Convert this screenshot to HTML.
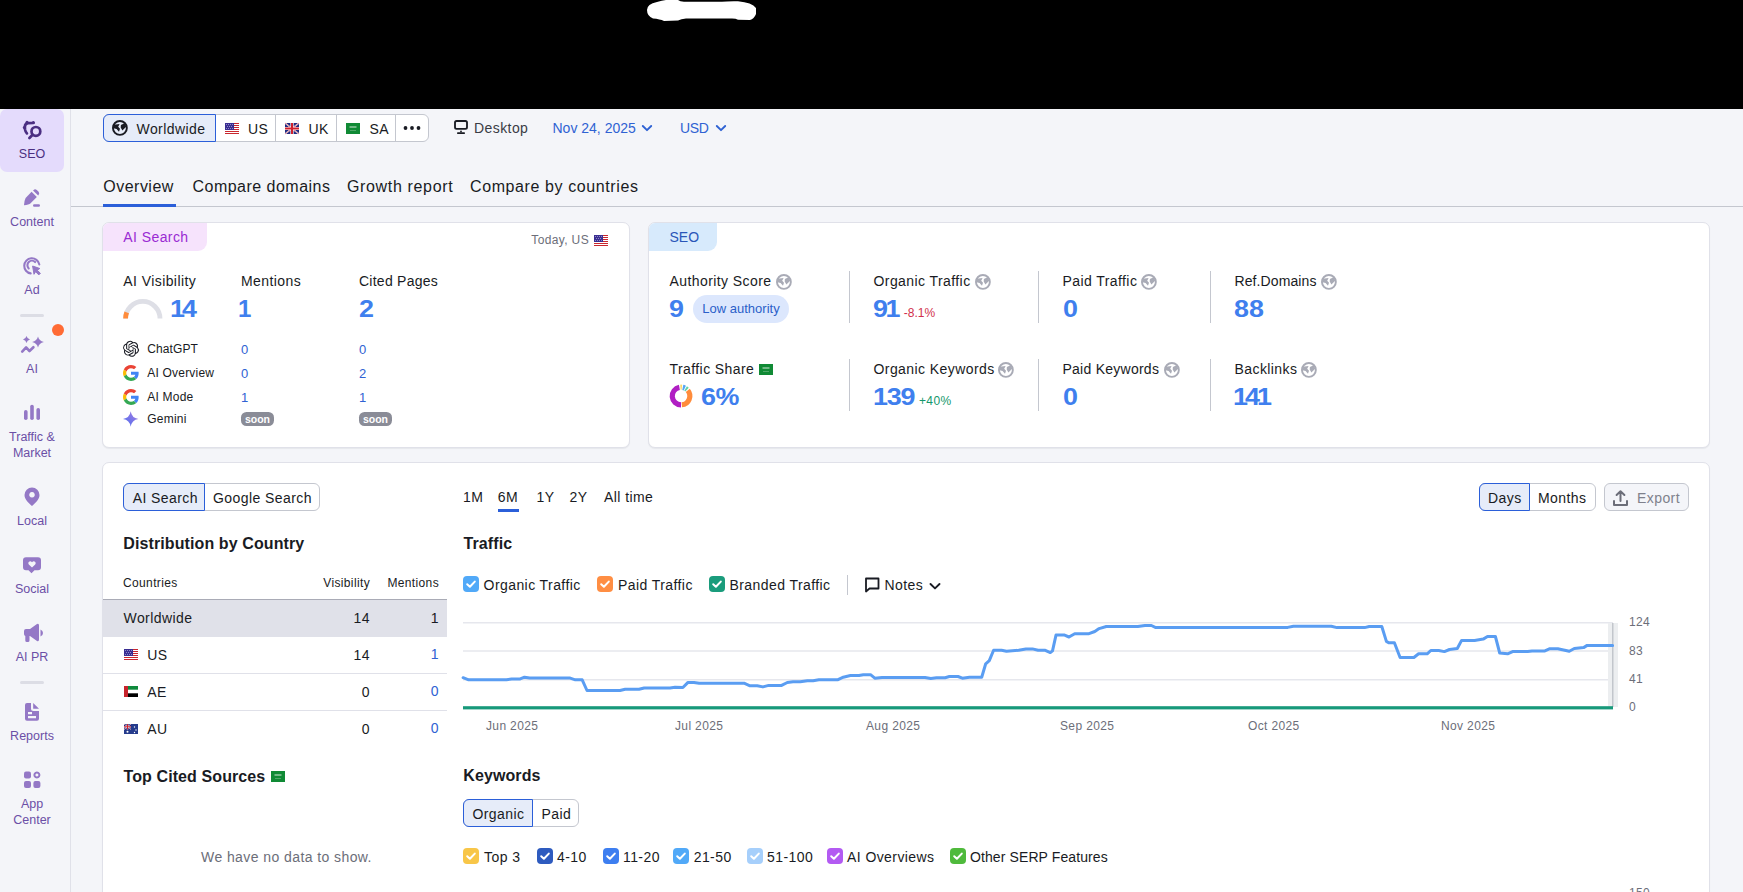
<!DOCTYPE html>
<html><head><meta charset="utf-8">
<style>
*{box-sizing:border-box;margin:0;padding:0}
html,body{width:1743px;height:892px;overflow:hidden;background:#f4f5f9;font-family:"Liberation Sans",sans-serif;color:#191b23}
.a{position:absolute}
.t{position:absolute;line-height:1;white-space:nowrap;letter-spacing:0.03em}
.blk{position:absolute;left:0;top:0;width:1743px;height:109px;background:#000}
.blob{position:absolute;left:647px;top:1px;width:109px;height:19px;background:#fff;border-radius:10px}
.side{position:absolute;left:0;top:109px;width:71px;height:783px;background:#f4f5f9;border-right:1px solid #e0e1e9}
.sl{position:absolute;left:0;width:64px;text-align:center;font-size:12.5px;line-height:1;color:#6b4fa6;white-space:nowrap}
.card{position:absolute;background:#fff;border:1px solid #e0e1e9;border-radius:7px;box-shadow:0 1px 1px rgba(25,27,35,.06)}
.blue{color:#3b7ded}
.num{font-weight:bold;font-size:24px;color:#3f7fee;letter-spacing:0;transform:scaleX(1.12);transform-origin:0 0}
.lbl{font-size:14px;color:#191b23}
.gray{color:#6c6e79}
.seg{position:absolute;height:28px;border:1px solid #c4c7cf;border-radius:6px;background:#fff}
.segact{position:absolute;top:-1px;height:28px;border:1px solid #2b5fd9;background:#e6edfb}
.vdiv{position:absolute;width:1px;background:#c4c7cf}
.cb{position:absolute;width:16px;height:16px;border-radius:4px}
.cb svg{position:absolute;left:0;top:0}
</style></head><body>
<div class="blk"></div>
<svg class="a" style="left:0;top:0" width="800" height="30"><path d="M657 2 Q662 0.3 666 0 L678 0 Q680 1.6 684 1.8 L722 1.8 Q727 1 738 1.2 Q752 2.5 756 8 L756 14 Q754 19 750 20 L738 19.8 Q736 18.4 732 18.4 L686 18.4 Q681 18.6 678 20.5 L664 21 Q660 19 653 18.5 Q647 16 647 10 Q647 4 657 2 Z" fill="#fff"/></svg>

<!-- SIDEBAR -->
<div class="side"></div>
<div class="a" style="left:0;top:109px;width:64px;height:63px;background:#e4dbfc;border-radius:7px"></div>


<!-- main separator line under tabs -->
<div class="a" style="left:71px;top:206px;width:1672px;height:1px;background:#c4c7cf"></div>

<!-- sidebar labels -->
<div class="sl" style="top:148px;color:#4b2f82">SEO</div>
<div class="sl" style="top:216px">Content</div>
<div class="sl" style="top:284px">Ad</div>
<div class="sl" style="top:362.5px">AI</div>
<div class="sl" style="top:431px">Traffic &amp;</div>
<div class="sl" style="top:447px">Market</div>
<div class="sl" style="top:515px">Local</div>
<div class="sl" style="top:583px">Social</div>
<div class="sl" style="top:651px">AI PR</div>
<div class="sl" style="top:730px">Reports</div>
<div class="sl" style="top:798px">App</div>
<div class="sl" style="top:814px">Center</div>
<div class="a" style="left:20px;top:314px;width:24px;height:3px;border-radius:2px;background:#dcdde5"></div>
<div class="a" style="left:20px;top:681px;width:24px;height:3px;border-radius:2px;background:#dcdde5"></div>
<div class="a" style="left:52px;top:324px;width:12px;height:12px;border-radius:50%;background:#ff6b35"></div>
<svg class="a" style="left:0;top:0" width="70" height="892">
 <g fill="none" stroke="#4b2f82" stroke-width="2.7" stroke-linecap="round" stroke-linejoin="round">
  <circle cx="35.9" cy="131.4" r="4.4"/>
  <path d="M32.6 134.8 L29.4 138"/>
  <path d="M33.4 123 L28 123.1 Q25 123.4 24.9 126.6 L25 129.4 Q25.3 131.6 26.9 133.4"/>
  <g fill="#4b2f82" stroke="none"><circle cx="27" cy="122.2" r="1.5"/><circle cx="33.4" cy="122.6" r="1.5"/><circle cx="24.3" cy="127.4" r="1.5"/></g>
 </g>
 <g fill="#9478c6">
  <!-- pencil -->
  <path d="M31.6 191.8 L36.8 197 L30.6 203.2 Q29 204.6 24 205.2 Q24.4 200.2 25.6 198 Z"/>
  <path d="M33.4 190.2 Q35 188.6 36.8 190 L38.6 191.8 Q40 193.6 38.4 195.2 L38.2 195.6 L33 190.4 Z"/>
  <rect x="33" y="204.2" width="7" height="2.6" rx="1.3"/>
  <!-- bars -->
  <rect x="24" y="410" width="3.6" height="10" rx="1.8"/>
  <rect x="30.2" y="404.8" width="3.6" height="15.2" rx="1.8"/>
  <rect x="36.4" y="408" width="3.6" height="12" rx="1.8"/>
  <!-- local pin -->
  <path d="M32 487.5 a7.5 7.5 0 0 1 7.5 7.5 c0 4.5 -4.5 8.5 -7.5 11 c-3 -2.5 -7.5 -6.5 -7.5 -11 a7.5 7.5 0 0 1 7.5 -7.5 z M32 492 a2.8 2.8 0 1 0 0.01 0 z" fill-rule="evenodd"/>
  <!-- social -->
  <path d="M26 557.2 h12 q3 0 3 3 v7 q0 3 -3 3 h-3.5 l-3 3 l-3 -3 h-2.5 q-3 0 -3 -3 v-7 q0 -3 3 -3 z M32 567.5 l-3.2 -3 q-1.3 -1.6 0.2 -2.8 q1.5 -1 3 0.5 q1.5 -1.5 3 -0.5 q1.5 1.2 0.2 2.8 z" fill-rule="evenodd"/>
  <!-- megaphone -->
  <path d="M24 631 q0 -2 2 -2 h4 l7 -5 q2 -1 2 1.5 v14 q0 2.5 -2 1.5 l-7 -5 h-0.5 v4.5 q0 1.6 -1.6 1.6 h-1 q-1.6 0 -1.6 -1.6 v-4.5 q-1.3 -0.3 -1.3 -2 z"/>
  <path d="M40.5 629.5 q2.5 1 2.5 3.5 q0 2.5 -2.5 3.5 z"/>
  <!-- reports -->
  <path d="M27 703 H31 V708.6 Q31 711.1 33.5 711.1 H39 V718.7 Q39 720.7 37 720.7 H27 Q25 720.7 25 718.7 V705 Q25 703 27 703 Z M28 712 V714.2 H32 V712 Z M28 716 V718.2 H36 V716 Z" fill-rule="evenodd"/>
  <path d="M33.2 703 L39 708.8 H33.2 Z"/>
  <!-- app center -->
  <rect x="24" y="771.6" width="7" height="7" rx="2"/>
  <rect x="24" y="781" width="7" height="7" rx="2"/>
  <rect x="33.4" y="781" width="7" height="7" rx="2"/>
  <path d="M36.9 771.6 a3.5 3.5 0 1 1 -0.01 0 z M36.9 773.6 a1.5 1.5 0 1 0 0.01 0 z" fill-rule="evenodd"/>
  <!-- AI sparkles -->
  <path d="M26.5 336 q0.6 2.6 3.5 3.5 q-2.9 0.9 -3.5 3.5 q-0.6 -2.6 -3.5 -3.5 q2.9 -0.9 3.5 -3.5 z"/>
  <path d="M38 336.4 q1 4.4 5.9 5.6 q-4.9 1.2 -5.9 5.6 q-1 -4.4 -5.9 -5.6 q4.9 -1.2 5.9 -5.6 z"/>
 </g>
 <g fill="none" stroke="#9478c6" stroke-linecap="round" stroke-linejoin="round">
  <path d="M22.2 351.6 L26.1 347.4 L29.5 351 L33.4 347.2" stroke-width="2.6"/>
  <!-- ad target -->
  <g transform="translate(-0.5 -1.2)"><path d="M31.2 274.6 A7.6 7.6 0 1 1 39.8 265.6" stroke-width="2.1"/>
  <path d="M29.2 269.6 A3.9 3.9 0 1 1 35.6 263.3" stroke-width="2.1"/></g>
 </g>
 <path d="M32.6 266 L39.8 268.5 L37.2 270.2 L40.4 273.3 L38.8 274.9 L35.6 271.7 L34 274.3 Z" fill="#9478c6" stroke="#9478c6" stroke-width="1" stroke-linejoin="round"/>
</svg>
<!-- toolbar -->
<div class="a" style="left:103px;top:114px;width:326px;height:28px;border:1px solid #c4c7cf;border-radius:6px;background:#fff"></div>
<div class="a" style="left:103px;top:114px;width:113px;height:28px;border:1px solid #2b5fd9;border-radius:6px 0 0 6px;background:#e6ecf9"></div>
<div class="a" style="left:275px;top:115px;width:1px;height:26px;background:#c4c7cf"></div>
<div class="a" style="left:336px;top:115px;width:1px;height:26px;background:#c4c7cf"></div>
<div class="a" style="left:395px;top:115px;width:1px;height:26px;background:#c4c7cf"></div>
<div class="t" style="left:136.5px;top:122px;font-size:14px">Worldwide</div>
<div class="t" style="left:248px;top:122px;font-size:14px">US</div>
<div class="t" style="left:308.5px;top:122px;font-size:14px">UK</div>
<div class="t" style="left:369.5px;top:122px;font-size:14px">SA</div>
<div class="t" style="left:474px;top:121px;font-size:14px;color:#3a3c45">Desktop</div>
<div class="t" style="left:552.5px;top:121px;font-size:14px;color:#2f62d3;letter-spacing:0">Nov 24, 2025</div>
<div class="t" style="left:680px;top:121px;font-size:14px;color:#2f62d3;letter-spacing:-0.4px">USD</div>
<!-- tabs -->
<div class="t" style="left:103.3px;top:179px;font-size:16px">Overview</div>
<div class="t" style="left:192.5px;top:179px;font-size:16px">Compare domains</div>
<div class="t" style="left:347px;top:179px;font-size:16px;letter-spacing:0.65px">Growth report</div>
<div class="t" style="left:470px;top:179px;font-size:16px;letter-spacing:0.6px">Compare by countries</div>
<div class="a" style="left:103px;top:204px;width:73px;height:3px;background:#2b5fd9"></div>
<!-- AI card -->
<div class="card" style="left:102px;top:222px;width:528px;height:226px"></div>
<div class="a" style="left:103px;top:223px;width:104px;height:28px;background:#f6e3fc;border-radius:6px 0 9px 0"></div>
<div class="t" style="left:123.3px;top:230px;font-size:14px;color:#9a2ad3">AI Search</div>
<div class="t gray" style="left:531.3px;top:234px;font-size:12px">Today, US</div>
<div class="t lbl" style="left:123.3px;top:274px">AI Visibility</div>
<div class="t lbl" style="left:241px;top:274px">Mentions</div>
<div class="t lbl" style="left:359px;top:274px;letter-spacing:0.25px">Cited Pages</div>
<div class="t num" style="left:170px;top:297px;letter-spacing:-2.6px">14</div>
<div class="t num" style="left:238px;top:297px;transform:none">1</div>
<div class="t num" style="left:359px;top:297px">2</div>
<div class="t" style="left:147.3px;top:343px;font-size:12px;letter-spacing:0.1px">ChatGPT</div>
<div class="t" style="left:147.3px;top:367px;font-size:12px;letter-spacing:0.2px">AI Overview</div>
<div class="t" style="left:147.3px;top:391px;font-size:12px;letter-spacing:0.2px">AI Mode</div>
<div class="t" style="left:147.3px;top:413px;font-size:12px;letter-spacing:0.2px">Gemini</div>
<div class="t" style="left:241px;top:343px;font-size:13px;color:#2f62d3">0</div>
<div class="t" style="left:241px;top:367px;font-size:13px;color:#2f62d3">0</div>
<div class="t" style="left:241px;top:391px;font-size:13px;color:#2f62d3">1</div>
<div class="t" style="left:359px;top:343px;font-size:13px;color:#2f62d3">0</div>
<div class="t" style="left:359px;top:367px;font-size:13px;color:#2f62d3">2</div>
<div class="t" style="left:359px;top:391px;font-size:13px;color:#2f62d3">1</div>
<div class="a" style="left:241px;top:412px;width:33px;height:14px;border-radius:5.5px;background:#8a8c97;color:#fff;font-size:10.5px;font-weight:bold;line-height:14px;text-align:center">soon</div>
<div class="a" style="left:359px;top:412px;width:33px;height:14px;border-radius:5.5px;background:#8a8c97;color:#fff;font-size:10.5px;font-weight:bold;line-height:14px;text-align:center">soon</div>

<!-- SEO card -->
<div class="card" style="left:648px;top:222px;width:1062px;height:226px"></div>
<div class="a" style="left:649px;top:223px;width:68px;height:28px;background:#d7eafc;border-radius:6px 0 9px 0"></div>
<div class="t" style="left:669.5px;top:230px;font-size:14px;color:#2a56b8;letter-spacing:0">SEO</div>
<div class="t lbl" style="left:669.5px;top:274px">Authority Score</div>
<div class="t lbl" style="left:873.5px;top:274px">Organic Traffic</div>
<div class="t lbl" style="left:1062.5px;top:274px">Paid Traffic</div>
<div class="t lbl" style="left:1234.5px;top:274px;letter-spacing:0.1px">Ref.Domains</div>
<div class="t num" style="left:669px;top:297px">9</div>
<div class="a" style="left:693px;top:295px;width:96px;height:28px;border-radius:14px;background:#dce7fd;color:#2b5fc9;font-size:13px;line-height:28px;text-align:center">Low authority</div>
<div class="t num" style="left:872.5px;top:297px;letter-spacing:-2.2px">91</div>
<div class="t" style="left:903.8px;top:306.5px;font-size:12px;color:#d1304c;letter-spacing:0">-8.1%</div>
<div class="t num" style="left:1062.5px;top:297px">0</div>
<div class="t num" style="left:1233.5px;top:297px">88</div>
<div class="t lbl" style="left:669.5px;top:362px">Traffic Share</div>
<div class="t lbl" style="left:873.5px;top:362px">Organic Keywords</div>
<div class="t lbl" style="left:1062.5px;top:362px;letter-spacing:0.25px">Paid Keywords</div>
<div class="t lbl" style="left:1234.5px;top:362px">Backlinks</div>
<div class="t num" style="left:701px;top:385px;letter-spacing:-0.4px">6%</div>
<div class="t num" style="left:873px;top:385px;letter-spacing:-1.1px">139</div>
<div class="t" style="left:919px;top:394.5px;font-size:12px;color:#15976c">+40%</div>
<div class="t num" style="left:1062.5px;top:385px">0</div>
<div class="t num" style="left:1233px;top:385px;letter-spacing:-2.6px">141</div>
<div class="vdiv" style="left:849px;top:271px;height:52px"></div>
<div class="vdiv" style="left:1038px;top:271px;height:52px"></div>
<div class="vdiv" style="left:1210px;top:271px;height:52px"></div>
<div class="vdiv" style="left:849px;top:359px;height:52px"></div>
<div class="vdiv" style="left:1038px;top:359px;height:52px"></div>
<div class="vdiv" style="left:1210px;top:359px;height:52px"></div>
<!-- bottom card -->
<div class="card" style="left:102px;top:462px;width:1608px;height:460px"></div>
<!-- AI/Google seg -->
<div class="a" style="left:123px;top:483px;width:197px;height:28px;border:1px solid #c4c7cf;border-radius:6px;background:#fff"></div>
<div class="a" style="left:123px;top:483px;width:82px;height:28px;border:1px solid #2b5fd9;border-radius:6px 0 0 6px;background:#e6ecf9"></div>
<div class="t" style="left:132.7px;top:491px;font-size:14px">AI Search</div>
<div class="t" style="left:213px;top:491px;font-size:14px">Google Search</div>
<div class="t" style="left:123.3px;top:536px;font-size:16px;font-weight:bold;letter-spacing:0.1px">Distribution by Country</div>
<div class="t" style="left:123px;top:577px;font-size:12px">Countries</div>
<div class="t" style="left:370px;top:577px;font-size:12px;transform:translateX(-100%)">Visibility</div>
<div class="t" style="left:439px;top:577px;font-size:12px;transform:translateX(-100%)">Mentions</div>
<div class="a" style="left:103px;top:599px;width:344px;height:1px;background:#a9abb6"></div>
<div class="a" style="left:103px;top:600px;width:344px;height:36.5px;background:#e0e1e9"></div>
<div class="a" style="left:103px;top:673px;width:344px;height:1px;background:#e0e1e9"></div>
<div class="a" style="left:103px;top:710px;width:344px;height:1px;background:#e0e1e9"></div>
<div class="t" style="left:123.5px;top:611px;font-size:14px">Worldwide</div>
<div class="t" style="left:370px;top:611px;font-size:14px;transform:translateX(-100%)">14</div>
<div class="t" style="left:439px;top:611px;font-size:14px;transform:translateX(-100%)">1</div>
<div class="t" style="left:147.3px;top:648px;font-size:14px">US</div>
<div class="t" style="left:370px;top:648px;font-size:14px;transform:translateX(-100%)">14</div>
<div class="t" style="left:439px;top:647px;font-size:14px;transform:translateX(-100%);color:#2f62d3">1</div>
<div class="t" style="left:147.3px;top:685px;font-size:14px">AE</div>
<div class="t" style="left:370px;top:685px;font-size:14px;transform:translateX(-100%)">0</div>
<div class="t" style="left:439px;top:683.5px;font-size:14px;transform:translateX(-100%);color:#2f62d3">0</div>
<div class="t" style="left:147.3px;top:722px;font-size:14px">AU</div>
<div class="t" style="left:370px;top:722px;font-size:14px;transform:translateX(-100%)">0</div>
<div class="t" style="left:439px;top:720.5px;font-size:14px;transform:translateX(-100%);color:#2f62d3">0</div>
<div class="t" style="left:123.5px;top:769px;font-size:16px;font-weight:bold;letter-spacing:0.1px">Top Cited Sources</div>
<div class="t gray" style="left:201px;top:850px;font-size:14px">We have no data to show.</div>

<!-- period tabs -->
<div class="t" style="left:463px;top:490px;font-size:14px">1M</div>
<div class="t" style="left:497.8px;top:490px;font-size:14px">6M</div>
<div class="t" style="left:536.6px;top:490px;font-size:14px">1Y</div>
<div class="t" style="left:569.6px;top:490px;font-size:14px">2Y</div>
<div class="t" style="left:604px;top:490px;font-size:14px">All time</div>
<div class="a" style="left:498px;top:509px;width:21px;height:3px;background:#2b5fd9"></div>
<!-- days/months -->
<div class="a" style="left:1479px;top:483px;width:117px;height:28px;border:1px solid #c4c7cf;border-radius:6px;background:#fff"></div>
<div class="a" style="left:1479px;top:483px;width:51px;height:28px;border:1px solid #2b5fd9;border-radius:6px 0 0 6px;background:#e6ecf9"></div>
<div class="t" style="left:1488px;top:491px;font-size:14px">Days</div>
<div class="t" style="left:1538px;top:491px;font-size:14px">Months</div>
<div class="a" style="left:1604px;top:483px;width:85px;height:28px;border:1px solid #c4c7cf;border-radius:6px;background:#f4f5f9"></div>
<div class="t" style="left:1637px;top:491px;font-size:14px;color:#7f818c">Export</div>

<div class="t" style="left:463.5px;top:536px;font-size:16px;font-weight:bold;letter-spacing:0.1px">Traffic</div>
<div class="t" style="left:483.6px;top:578px;font-size:14px">Organic Traffic</div>
<div class="t" style="left:618px;top:578px;font-size:14px">Paid Traffic</div>
<div class="t" style="left:729.5px;top:578px;font-size:14px">Branded Traffic</div>
<div class="a" style="left:847px;top:575px;width:1px;height:20px;background:#c4c7cf"></div>
<div class="t" style="left:884.5px;top:578px;font-size:14px">Notes</div>

<!-- x labels -->
<div class="t gray" style="left:486px;top:720px;font-size:12px">Jun 2025</div>
<div class="t gray" style="left:675px;top:720px;font-size:12px">Jul 2025</div>
<div class="t gray" style="left:866px;top:720px;font-size:12px">Aug 2025</div>
<div class="t gray" style="left:1060px;top:720px;font-size:12px">Sep 2025</div>
<div class="t gray" style="left:1248px;top:720px;font-size:12px">Oct 2025</div>
<div class="t gray" style="left:1441px;top:720px;font-size:12px">Nov 2025</div>
<div class="t gray" style="left:1629px;top:615.5px;font-size:12px">124</div>
<div class="t gray" style="left:1629px;top:644.5px;font-size:12px">83</div>
<div class="t gray" style="left:1629px;top:673px;font-size:12px">41</div>
<div class="t gray" style="left:1629px;top:700.5px;font-size:12px">0</div>
<div class="t gray" style="left:1629px;top:887px;font-size:12px">150</div>

<div class="t" style="left:463.3px;top:768px;font-size:16px;font-weight:bold;letter-spacing:0.1px">Keywords</div>
<div class="a" style="left:463px;top:799px;width:116px;height:28px;border:1px solid #c4c7cf;border-radius:6px;background:#fff"></div>
<div class="a" style="left:463px;top:799px;width:70px;height:28px;border:1px solid #2b5fd9;border-radius:6px 0 0 6px;background:#e6ecf9"></div>
<div class="t" style="left:472.4px;top:807px;font-size:14px">Organic</div>
<div class="t" style="left:541.5px;top:807px;font-size:14px">Paid</div>
<div class="t" style="left:484px;top:850px;font-size:14px">Top 3</div>
<div class="t" style="left:557px;top:850px;font-size:14px">4-10</div>
<div class="t" style="left:623px;top:850px;font-size:14px">11-20</div>
<div class="t" style="left:693.7px;top:850px;font-size:14px">21-50</div>
<div class="t" style="left:767px;top:850px;font-size:14px">51-100</div>
<div class="t" style="left:847px;top:850px;font-size:14px">AI Overviews</div>
<div class="t" style="left:970px;top:850px;font-size:14px;letter-spacing:0.1px">Other SERP Features</div>

<svg class="a" style="left:0;top:0" width="1743" height="892">
 <g stroke="#e6e7ed" stroke-width="1.5">
  <line x1="463" y1="622.8" x2="1613" y2="622.8"/>
  <line x1="463" y1="651.1" x2="1613" y2="651.1"/>
  <line x1="463" y1="679.7" x2="1613" y2="679.7"/>
 </g>
 <rect x="1608" y="623" width="10" height="84" fill="#eceef0"/>
 <rect x="1612" y="623" width="1.5" height="84" fill="#c2c6cc"/>
 <path d="M463.1 677.7 L468.6 679.8 L506.5 679.8 L511.6 678.9 L520.2 678.9 L524.5 677.2 L529.7 678.1 L570.2 678.1 L575.3 679.8 L582.2 679.8 L587.0 690.5 L620.0 690.5 L625.2 689.3 L639.0 689.3 L644.2 688.0 L670.0 688.0 L675.1 687.2 L682.9 687.5 L688.0 682.4 L694.0 682.4 L699.2 683.2 L744.0 683.2 L750.0 685.8 L757.2 685.8 L762.9 686.9 L768.7 685.4 L781.6 685.4 L787.3 682.5 L793.0 681.8 L800.2 681.8 L807.4 680.8 L813.1 680.8 L818.9 679.8 L837.5 679.8 L843.3 677.2 L850.4 675.5 L859.0 675.5 L863.3 674.7 L870.5 674.7 L874.8 678.2 L882.0 677.4 L925.0 677.4 L930.8 678.4 L936.5 677.7 L945.1 677.7 L949.4 676.5 L958.0 676.5 L962.3 678.2 L969.5 677.2 L981.7 677.2 L985.7 663.8 L989.3 660.6 L993.6 650.2 L1001.5 650.2 L1006.5 651.2 L1018.7 650.2 L1025.9 648.9 L1032.4 648.9 L1038.1 650.3 L1045.3 650.3 L1050.3 652.6 L1052.5 650.9 L1056.0 635.1 L1064.6 635.1 L1069.0 637.0 L1074.7 633.7 L1089.0 633.7 L1094.8 631.5 L1099.1 628.6 L1106.3 626.5 L1137.8 626.5 L1145.0 625.5 L1151.4 625.5 L1155.8 627.6 L1287.7 627.4 L1293.4 626.2 L1331.3 626.2 L1337.0 627.6 L1364.6 627.6 L1369.2 626.5 L1381.8 626.5 L1386.4 641.4 L1388.7 642.8 L1394.4 642.8 L1400.1 657.5 L1413.9 657.5 L1418.6 653.8 L1427.2 653.8 L1430.8 650.5 L1438.7 650.5 L1444.4 651.6 L1449.5 649.5 L1457.3 648.5 L1461.6 640.4 L1474.6 640.4 L1483.2 639.1 L1487.5 636.5 L1495.4 636.5 L1499.7 653.0 L1507.6 653.8 L1512.6 651.6 L1527.6 651.6 L1532.0 650.9 L1544.9 650.9 L1549.9 648.7 L1557.8 648.7 L1569.3 651.3 L1574.3 648.5 L1583.6 647.6 L1587.2 645.4 L1612.6 645.4" fill="none" stroke="#5a9df2" stroke-width="3" stroke-linejoin="round" stroke-linecap="round"/>
 <rect x="463" y="706.2" width="1150" height="3.2" fill="#17997a"/>
</svg>
<svg class="a" style="left:0;top:0" width="1743" height="892">
 <defs><linearGradient id="gem" x1="0" y1="1" x2="1" y2="0"><stop offset="0" stop-color="#4a6cf0"/><stop offset="1" stop-color="#a77ee0"/></linearGradient></defs>
 <!-- worldwide globe -->
 <g transform="translate(112 120)">
   <circle cx="7.9" cy="7.9" r="6.95" fill="none" stroke="#191b23" stroke-width="1.9"/>
   <path d="M1.5 4.8 L7.6 4.0 L6.2 6.8 L8.0 8.7 L7.0 11.8 L4.6 8.9 L1.5 8.2 Z M8.9 5.0 L12.5 3.2 L14.4 6.4 L10.4 10.6 L8.7 7.4 Z" fill="#191b23" />
 </g>
 <g transform="translate(225 123)"><g>
   <rect x="0" y="0" width="14" height="11" fill="#fff"/>
   <g fill="#c9272e"><rect y="0" width="14" height="1"/><rect y="2" width="14" height="1"/><rect y="4" width="14" height="1"/><rect y="6" width="14" height="1"/><rect y="8" width="14" height="1"/><rect y="10" width="14" height="1"/></g>
   <rect x="0" y="0" width="9" height="7" fill="#3a2e92"/>
   <g fill="#8f89c4"><rect x="1" y="1" width="1" height="1"/><rect x="3" y="1" width="1" height="1"/><rect x="5" y="1" width="1" height="1"/><rect x="7" y="1" width="1" height="1"/><rect x="2" y="3" width="1" height="1"/><rect x="4" y="3" width="1" height="1"/><rect x="6" y="3" width="1" height="1"/><rect x="1" y="5" width="1" height="1"/><rect x="3" y="5" width="1" height="1"/><rect x="5" y="5" width="1" height="1"/><rect x="7" y="5" width="1" height="1"/></g>
  </g></g>
 <g transform="translate(285 123)"><g>
   <rect width="14" height="11" fill="#1f2a80"/>
   <path d="M0 0 L14 11 M14 0 L0 11" stroke="#fff" stroke-width="1.5"/>
   <path d="M0 0 L14 11 M14 0 L0 11" stroke="#d03a4a" stroke-width="0.6"/>
   <path d="M7 0 V11 M0 5.5 H14" stroke="#fff" stroke-width="3.2"/>
   <path d="M7 0 V11 M0 5.5 H14" stroke="#d0202c" stroke-width="2"/>
  </g></g>
 <g transform="translate(346 123)"><g>
   <rect width="14" height="11" fill="#108a35"/>
   <rect x="3.5" y="3.2" width="7" height="1.6" fill="#8cc59c"/>
   <rect x="4" y="7.4" width="6" height="0.5" fill="#8cc59c"/>
  </g></g>
 <g fill="#191b23"><circle cx="405.5" cy="128" r="1.9"/><circle cx="412" cy="128" r="1.9"/><circle cx="418.5" cy="128" r="1.9"/></g>
 <!-- desktop -->
 <rect x="455" y="121" width="12" height="7.9" rx="1.6" fill="none" stroke="#191b23" stroke-width="1.85"/>
 <circle cx="461" cy="131.5" r="0.9" fill="#191b23"/>
 <rect x="457.1" y="132.2" width="7.8" height="1.8" rx="0.5" fill="#191b23"/>
 <g fill="none" stroke="#2f62d3" stroke-width="1.9" stroke-linecap="round" stroke-linejoin="round">
  <path d="M642.8 126 L647 130.2 L651.2 126"/>
  <path d="M716.8 126 L721 130.2 L725.2 126"/>
 </g>
 <!-- today flag -->
 <g transform="translate(594 235)"><g>
   <rect x="0" y="0" width="14" height="11" fill="#fff"/>
   <g fill="#c9272e"><rect y="0" width="14" height="1"/><rect y="2" width="14" height="1"/><rect y="4" width="14" height="1"/><rect y="6" width="14" height="1"/><rect y="8" width="14" height="1"/><rect y="10" width="14" height="1"/></g>
   <rect x="0" y="0" width="9" height="7" fill="#3a2e92"/>
   <g fill="#8f89c4"><rect x="1" y="1" width="1" height="1"/><rect x="3" y="1" width="1" height="1"/><rect x="5" y="1" width="1" height="1"/><rect x="7" y="1" width="1" height="1"/><rect x="2" y="3" width="1" height="1"/><rect x="4" y="3" width="1" height="1"/><rect x="6" y="3" width="1" height="1"/><rect x="1" y="5" width="1" height="1"/><rect x="3" y="5" width="1" height="1"/><rect x="5" y="5" width="1" height="1"/><rect x="7" y="5" width="1" height="1"/></g>
  </g></g>
 <!-- gauge -->
 <path d="M125.6 318.6 A17.2 17.2 0 0 1 160 318.6" fill="none" stroke="#dedfe6" stroke-width="4.8"/>
 <path d="M125.6 318.6 A17.2 17.2 0 0 1 126.7 312.4" fill="none" stroke="#ff8c3b" stroke-width="4.8"/>
 <!-- chatgpt -->
 <path transform="translate(123 340.8) scale(0.6667)" d="M22.2819 9.8211a5.9847 5.9847 0 0 0-.5157-4.9108 6.0462 6.0462 0 0 0-6.5098-2.9A6.0651 6.0651 0 0 0 4.9807 4.1818a5.9847 5.9847 0 0 0-3.9977 2.9 6.0462 6.0462 0 0 0 .7427 7.0966 5.98 5.98 0 0 0 .511 4.9107 6.051 6.051 0 0 0 6.5146 2.9001A5.9847 5.9847 0 0 0 13.2599 24a6.0557 6.0557 0 0 0 5.7718-4.2058 5.9894 5.9894 0 0 0 3.9977-2.9001 6.0557 6.0557 0 0 0-.7475-7.0729zm-9.022 12.6081a4.4755 4.4755 0 0 1-2.8764-1.0408l.1419-.0804 4.7783-2.7582a.7948.7948 0 0 0 .3927-.6813v-6.7369l2.02 1.1686a.071.071 0 0 1 .038.052v5.5826a4.504 4.504 0 0 1-4.4945 4.4944zm-9.6607-4.1254a4.4708 4.4708 0 0 1-.5346-3.0137l.142.0852 4.783 2.7582a.7712.7712 0 0 0 .7806 0l5.8428-3.3685v2.3324a.0804.0804 0 0 1-.0332.0615L9.74 19.9502a4.4992 4.4992 0 0 1-6.1408-1.6464zM2.3408 7.8956a4.485 4.485 0 0 1 2.3655-1.9728V11.6a.7664.7664 0 0 0 .3879.6765l5.8144 3.3543-2.0201 1.1685a.0757.0757 0 0 1-.071 0l-4.8303-2.7865A4.504 4.504 0 0 1 2.3408 7.872zm16.5963 3.8558L13.1038 8.364 15.1192 7.2a.0757.0757 0 0 1 .071 0l4.8303 2.7913a4.4944 4.4944 0 0 1-.6765 8.1042v-5.6772a.79.79 0 0 0-.407-.667zm2.0107-3.0231l-.142-.0852-4.7735-2.7818a.7759.7759 0 0 0-.7854 0L9.409 9.2297V6.8974a.0662.0662 0 0 1 .0284-.0615l4.8303-2.7866a4.4992 4.4992 0 0 1 6.6802 4.66zM8.3065 12.863l-2.02-1.1638a.0804.0804 0 0 1-.038-.0567V6.0742a4.4992 4.4992 0 0 1 7.3757-3.4537l-.142.0805L8.704 5.459a.7948.7948 0 0 0-.3927.6813zm1.0976-2.3654l2.602-1.4998 2.6069 1.4998v2.9994l-2.5974 1.4997-2.6067-1.4997Z" fill="#191b23"/>
 <g transform="translate(123 365)"><g transform="scale(0.3333)">
   <path d="M24 9.5c3.54 0 6.71 1.22 9.21 3.6l6.85-6.85C35.9 2.38 30.47 0 24 0 14.62 0 6.51 5.38 2.56 13.22l7.98 6.19C12.43 13.72 17.74 9.5 24 9.5z" fill="#EA4335"/>
   <path d="M46.98 24.55c0-1.570-.15-3.09-.38-4.55H24v9.02h12.94c-.58 2.96-2.26 5.48-4.78 7.18l7.73 6c4.51-4.18 7.09-10.360 7.09-17.65z" fill="#4285F4"/>
   <path d="M10.53 28.59c-.48-1.45-.76-2.99-.76-4.59s.27-3.14.76-4.59l-7.98-6.19C.92 16.46 0 20.12 0 24c0 3.88.92 7.54 2.56 10.78l7.97-6.19z" fill="#FBBC05"/>
   <path d="M24 48c6.48 0 11.93-2.13 15.89-5.81l-7.73-6c-2.15 1.450-4.92 2.3-8.16 2.3-6.26 0-11.57-4.22-13.47-9.91l-7.98 6.19C6.51 42.62 14.62 48 24 48z" fill="#34A853"/>
  </g></g>
 <g transform="translate(123 389)"><g transform="scale(0.3333)">
   <path d="M24 9.5c3.54 0 6.71 1.22 9.21 3.6l6.85-6.85C35.9 2.38 30.47 0 24 0 14.62 0 6.51 5.38 2.56 13.22l7.98 6.19C12.43 13.72 17.74 9.5 24 9.5z" fill="#EA4335"/>
   <path d="M46.98 24.55c0-1.570-.15-3.09-.38-4.55H24v9.02h12.94c-.58 2.96-2.26 5.48-4.78 7.18l7.73 6c4.51-4.18 7.09-10.360 7.09-17.65z" fill="#4285F4"/>
   <path d="M10.53 28.59c-.48-1.45-.76-2.99-.76-4.59s.27-3.14.76-4.59l-7.98-6.19C.92 16.46 0 20.12 0 24c0 3.88.92 7.54 2.56 10.78l7.97-6.19z" fill="#FBBC05"/>
   <path d="M24 48c6.48 0 11.93-2.13 15.89-5.81l-7.73-6c-2.15 1.450-4.92 2.3-8.16 2.3-6.26 0-11.57-4.22-13.47-9.91l-7.98 6.19C6.51 42.62 14.62 48 24 48z" fill="#34A853"/>
  </g></g>
 <path transform="translate(123 411.3) scale(0.6417)" d="M12 24A14.304 14.304 0 0 0 0 12 14.304 14.304 0 0 0 12 0a14.305 14.305 0 0 0 12 12 14.305 14.305 0 0 0-12 12" fill="url(#gem)"/>
 <!-- info icons row1 -->
 <g transform="translate(776 274)"><g>
   <circle cx="7.9" cy="7.9" r="6.95" fill="none" stroke="#a9abb6" stroke-width="1.9"/>
   <path d="M1.5 4.8 L7.6 4.0 L6.2 6.8 L8.0 8.7 L7.0 11.8 L4.6 8.9 L1.5 8.2 Z M8.9 5.0 L12.5 3.2 L14.4 6.4 L10.4 10.6 L8.7 7.4 Z" fill="#a9abb6"/>
  </g></g>
 <g transform="translate(975 274)"><g>
   <circle cx="7.9" cy="7.9" r="6.95" fill="none" stroke="#a9abb6" stroke-width="1.9"/>
   <path d="M1.5 4.8 L7.6 4.0 L6.2 6.8 L8.0 8.7 L7.0 11.8 L4.6 8.9 L1.5 8.2 Z M8.9 5.0 L12.5 3.2 L14.4 6.4 L10.4 10.6 L8.7 7.4 Z" fill="#a9abb6"/>
  </g></g>
 <g transform="translate(1141 274)"><g>
   <circle cx="7.9" cy="7.9" r="6.95" fill="none" stroke="#a9abb6" stroke-width="1.9"/>
   <path d="M1.5 4.8 L7.6 4.0 L6.2 6.8 L8.0 8.7 L7.0 11.8 L4.6 8.9 L1.5 8.2 Z M8.9 5.0 L12.5 3.2 L14.4 6.4 L10.4 10.6 L8.7 7.4 Z" fill="#a9abb6"/>
  </g></g>
 <g transform="translate(1321 274)"><g>
   <circle cx="7.9" cy="7.9" r="6.95" fill="none" stroke="#a9abb6" stroke-width="1.9"/>
   <path d="M1.5 4.8 L7.6 4.0 L6.2 6.8 L8.0 8.7 L7.0 11.8 L4.6 8.9 L1.5 8.2 Z M8.9 5.0 L12.5 3.2 L14.4 6.4 L10.4 10.6 L8.7 7.4 Z" fill="#a9abb6"/>
  </g></g>
 <g transform="translate(998 362)"><g>
   <circle cx="7.9" cy="7.9" r="6.95" fill="none" stroke="#a9abb6" stroke-width="1.9"/>
   <path d="M1.5 4.8 L7.6 4.0 L6.2 6.8 L8.0 8.7 L7.0 11.8 L4.6 8.9 L1.5 8.2 Z M8.9 5.0 L12.5 3.2 L14.4 6.4 L10.4 10.6 L8.7 7.4 Z" fill="#a9abb6"/>
  </g></g>
 <g transform="translate(1164 362)"><g>
   <circle cx="7.9" cy="7.9" r="6.95" fill="none" stroke="#a9abb6" stroke-width="1.9"/>
   <path d="M1.5 4.8 L7.6 4.0 L6.2 6.8 L8.0 8.7 L7.0 11.8 L4.6 8.9 L1.5 8.2 Z M8.9 5.0 L12.5 3.2 L14.4 6.4 L10.4 10.6 L8.7 7.4 Z" fill="#a9abb6"/>
  </g></g>
 <g transform="translate(1301 362)"><g>
   <circle cx="7.9" cy="7.9" r="6.95" fill="none" stroke="#a9abb6" stroke-width="1.9"/>
   <path d="M1.5 4.8 L7.6 4.0 L6.2 6.8 L8.0 8.7 L7.0 11.8 L4.6 8.9 L1.5 8.2 Z M8.9 5.0 L12.5 3.2 L14.4 6.4 L10.4 10.6 L8.7 7.4 Z" fill="#a9abb6"/>
  </g></g>
 <g transform="translate(759 364)"><g>
   <rect width="14" height="11" fill="#108a35"/>
   <rect x="3.5" y="3.2" width="7" height="1.6" fill="#8cc59c"/>
   <rect x="4" y="7.4" width="6" height="0.5" fill="#8cc59c"/>
  </g></g>
 <!-- donut -->
 <g transform="translate(681 396)" fill="none" stroke-width="5.2">
  <path d="M0 8.8 A8.8 8.8 0 0 1 -1.6 -8.65" stroke="#b01fc3"/>
  <path d="M-0.6 -8.78 A8.8 8.8 0 0 1 0.9 -8.75" stroke="#fcd66a"/>
  <path d="M1.8 -8.6 A8.8 8.8 0 0 1 3.8 -7.95" stroke="#55a6f5"/>
  <path d="M4.6 -7.5 A8.8 8.8 0 0 1 6 -6.45" stroke="#5fd0a8"/>
  <path d="M6.8 -5.6 A8.8 8.8 0 0 1 0.8 8.76" stroke="#ff8c3b"/>
 </g>
 <!-- flags table -->
 <g transform="translate(124 649)"><g>
   <rect x="0" y="0" width="14" height="11" fill="#fff"/>
   <g fill="#c9272e"><rect y="0" width="14" height="1"/><rect y="2" width="14" height="1"/><rect y="4" width="14" height="1"/><rect y="6" width="14" height="1"/><rect y="8" width="14" height="1"/><rect y="10" width="14" height="1"/></g>
   <rect x="0" y="0" width="9" height="7" fill="#3a2e92"/>
   <g fill="#8f89c4"><rect x="1" y="1" width="1" height="1"/><rect x="3" y="1" width="1" height="1"/><rect x="5" y="1" width="1" height="1"/><rect x="7" y="1" width="1" height="1"/><rect x="2" y="3" width="1" height="1"/><rect x="4" y="3" width="1" height="1"/><rect x="6" y="3" width="1" height="1"/><rect x="1" y="5" width="1" height="1"/><rect x="3" y="5" width="1" height="1"/><rect x="5" y="5" width="1" height="1"/><rect x="7" y="5" width="1" height="1"/></g>
  </g></g>
 <g transform="translate(124 686)"><rect width="14" height="11" fill="#fff"/><rect y="0" width="14" height="3.7" fill="#0e8a3c"/><rect y="7.3" width="14" height="3.7" fill="#000"/><rect width="4" height="11" fill="#c8242c"/></g>
 <g transform="translate(124 724)"><rect width="14" height="10" fill="#253b8c"/><g transform="scale(0.5)"><g transform="translate(0 0)"><g>
   <rect width="14" height="11" fill="#1f2a80"/>
   <path d="M0 0 L14 11 M14 0 L0 11" stroke="#fff" stroke-width="1.5"/>
   <path d="M0 0 L14 11 M14 0 L0 11" stroke="#d03a4a" stroke-width="0.6"/>
   <path d="M7 0 V11 M0 5.5 H14" stroke="#fff" stroke-width="3.2"/>
   <path d="M7 0 V11 M0 5.5 H14" stroke="#d0202c" stroke-width="2"/>
  </g></g></g><g fill="#fff"><circle cx="3.5" cy="7.8" r="1"/><circle cx="10.5" cy="3" r="0.7"/><circle cx="12" cy="6" r="0.7"/><circle cx="10.5" cy="8.5" r="0.7"/></g></g>
 <g transform="translate(271 771)"><g>
   <rect width="14" height="11" fill="#108a35"/>
   <rect x="3.5" y="3.2" width="7" height="1.6" fill="#8cc59c"/>
   <rect x="4" y="7.4" width="6" height="0.5" fill="#8cc59c"/>
  </g></g>
 <!-- export icon -->
 <g fill="none" stroke="#6c6e79" stroke-width="2" stroke-linecap="round" stroke-linejoin="round">
  <path d="M1614 501 V505 H1627 V501"/>
  <path d="M1620.5 501 V491.5 M1616.6 495 L1620.5 491.2 L1624.4 495"/>
 </g>
 <!-- checkboxes traffic -->
 <rect x="463" y="576" width="16" height="16" rx="4" fill="#51a9f8"/><g transform="translate(463 576)"><g><path d="M4.2 8.2 L6.9 10.8 L11.8 5.6" fill="none" stroke="#fff" stroke-width="2" stroke-linecap="round" stroke-linejoin="round"/></g></g>
 <rect x="597" y="576" width="16" height="16" rx="4" fill="#ff8e43"/><g transform="translate(597 576)"><g><path d="M4.2 8.2 L6.9 10.8 L11.8 5.6" fill="none" stroke="#fff" stroke-width="2" stroke-linecap="round" stroke-linejoin="round"/></g></g>
 <rect x="709" y="576" width="16" height="16" rx="4" fill="#1a9c7c"/><g transform="translate(709 576)"><g><path d="M4.2 8.2 L6.9 10.8 L11.8 5.6" fill="none" stroke="#fff" stroke-width="2" stroke-linecap="round" stroke-linejoin="round"/></g></g>
 <!-- notes -->
 <path d="M866 578.5 H878.5 V588.5 H869.5 L866 591.5 Z" fill="none" stroke="#191b23" stroke-width="1.8" stroke-linejoin="round"/>
 <path d="M930.5 584 L935 588.4 L939.5 584" fill="none" stroke="#191b23" stroke-width="1.9" stroke-linecap="round" stroke-linejoin="round"/>
 <!-- keyword checkboxes -->
 <rect x="463" y="848" width="16" height="16" rx="4" fill="#f8c648"/><g transform="translate(463 848)"><g><path d="M4.2 8.2 L6.9 10.8 L11.8 5.6" fill="none" stroke="#fff" stroke-width="2" stroke-linecap="round" stroke-linejoin="round"/></g></g>
 <rect x="537" y="848" width="16" height="16" rx="4" fill="#2e5bbf"/><g transform="translate(537 848)"><g><path d="M4.2 8.2 L6.9 10.8 L11.8 5.6" fill="none" stroke="#fff" stroke-width="2" stroke-linecap="round" stroke-linejoin="round"/></g></g>
 <rect x="603" y="848" width="16" height="16" rx="4" fill="#3d7ef0"/><g transform="translate(603 848)"><g><path d="M4.2 8.2 L6.9 10.8 L11.8 5.6" fill="none" stroke="#fff" stroke-width="2" stroke-linecap="round" stroke-linejoin="round"/></g></g>
 <rect x="673" y="848" width="16" height="16" rx="4" fill="#51a9f8"/><g transform="translate(673 848)"><g><path d="M4.2 8.2 L6.9 10.8 L11.8 5.6" fill="none" stroke="#fff" stroke-width="2" stroke-linecap="round" stroke-linejoin="round"/></g></g>
 <rect x="747" y="848" width="16" height="16" rx="4" fill="#a6cffb"/><g transform="translate(747 848)"><g><path d="M4.2 8.2 L6.9 10.8 L11.8 5.6" fill="none" stroke="#fff" stroke-width="2" stroke-linecap="round" stroke-linejoin="round"/></g></g>
 <rect x="827" y="848" width="16" height="16" rx="4" fill="#b35af2"/><g transform="translate(827 848)"><g><path d="M4.2 8.2 L6.9 10.8 L11.8 5.6" fill="none" stroke="#fff" stroke-width="2" stroke-linecap="round" stroke-linejoin="round"/></g></g>
 <rect x="950" y="848" width="16" height="16" rx="4" fill="#4fba3c"/><g transform="translate(950 848)"><g><path d="M4.2 8.2 L6.9 10.8 L11.8 5.6" fill="none" stroke="#fff" stroke-width="2" stroke-linecap="round" stroke-linejoin="round"/></g></g>
</svg>

</body></html>
